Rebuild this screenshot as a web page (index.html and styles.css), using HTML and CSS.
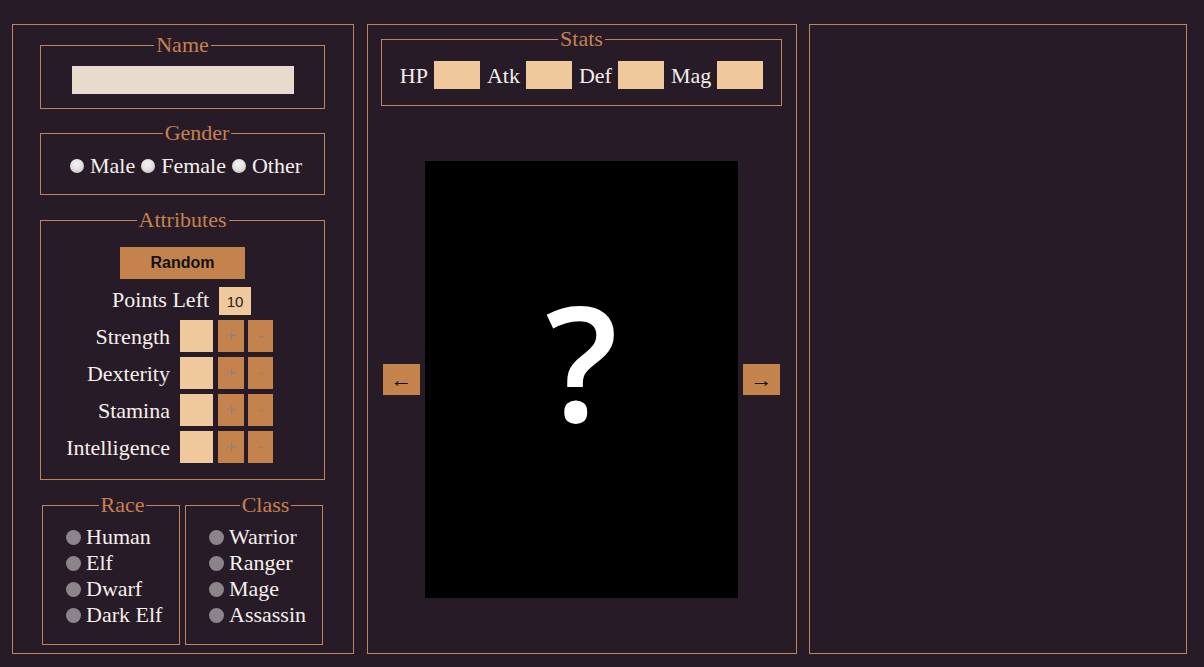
FILE: index.html
```html
<!DOCTYPE html>
<html>
<head>
<meta charset="utf-8">
<title>Character Creator</title>
<link rel="stylesheet" href="styles.css">
</head>
<body>
<div class="page">
<div class="panel left">
  <fieldset class="box name-box">
    <legend class="lg">Name</legend>
    <input class="name-input" type="text">
  </fieldset>

  <fieldset class="box gender-box">
    <legend class="lg">Gender</legend>
    <div class="gender-row">
      <span class="radio light"></span><span class="txt">Male</span>
      <span class="radio light"></span><span class="txt">Female</span>
      <span class="radio light"></span><span class="txt">Other</span>
    </div>
  </fieldset>

  <fieldset class="box attr-box">
    <legend class="lg">Attributes</legend>
    <div class="random-wrap"><button class="random-btn">Random</button></div>
    <div class="points-row">
      <span class="txt">Points Left</span>
      <span class="points-val">10</span>
    </div>
    <div class="attr-row">
      <span class="txt attr-label">Strength</span>
      <span class="attr-val"></span>
      <button class="pm plus">+</button>
      <button class="pm minus">-</button>
    </div>
    <div class="attr-row">
      <span class="txt attr-label">Dexterity</span>
      <span class="attr-val"></span>
      <button class="pm plus">+</button>
      <button class="pm minus">-</button>
    </div>
    <div class="attr-row">
      <span class="txt attr-label">Stamina</span>
      <span class="attr-val"></span>
      <button class="pm plus">+</button>
      <button class="pm minus">-</button>
    </div>
    <div class="attr-row">
      <span class="txt attr-label">Intelligence</span>
      <span class="attr-val"></span>
      <button class="pm plus">+</button>
      <button class="pm minus">-</button>
    </div>
  </fieldset>

  <div class="pair">
    <fieldset class="box list-box">
      <legend class="lg">Race</legend>
      <div class="opt"><span class="radio dark"></span><span class="txt">Human</span></div>
      <div class="opt"><span class="radio dark"></span><span class="txt">Elf</span></div>
      <div class="opt"><span class="radio dark"></span><span class="txt">Dwarf</span></div>
      <div class="opt"><span class="radio dark"></span><span class="txt">Dark Elf</span></div>
    </fieldset>
    <fieldset class="box list-box">
      <legend class="lg">Class</legend>
      <div class="opt"><span class="radio dark"></span><span class="txt">Warrior</span></div>
      <div class="opt"><span class="radio dark"></span><span class="txt">Ranger</span></div>
      <div class="opt"><span class="radio dark"></span><span class="txt">Mage</span></div>
      <div class="opt"><span class="radio dark"></span><span class="txt">Assassin</span></div>
    </fieldset>
  </div>
</div>

<div class="panel middle">
  <fieldset class="box stats-box">
    <legend class="lg">Stats</legend>
    <div class="stats-row">
      <span class="stat"><span class="txt">HP</span><span class="stat-val"></span></span>
      <span class="stat"><span class="txt">Atk</span><span class="stat-val"></span></span>
      <span class="stat"><span class="txt">Def</span><span class="stat-val"></span></span>
      <span class="stat"><span class="txt">Mag</span><span class="stat-val"></span></span>
    </div>
  </fieldset>
  <div class="viewer">
    <button class="arrow">&larr;</button>
    <div class="portrait"><span class="qmark">?</span></div>
    <button class="arrow">&rarr;</button>
  </div>
</div>

<div class="panel right"></div>
</div>
</body>
</html>
```

FILE: styles.css
```css
html, body {
  margin: 0;
  padding: 0;
  background: #281b28;
  font-family: "Liberation Serif", "Times New Roman", serif;
}

.page {
  background: #281b28;
  color: #f5f0ea;
  font-family: "Liberation Serif", "Times New Roman", serif;
  font-size: 22px;
  display: flex;
  align-items: flex-start;
  padding: 24px 0 0 12px;
  height: 667px;
  box-sizing: border-box;
  overflow: hidden;
}

.txt,
.lg {
  font-family: "Liberation Serif", "Times New Roman", serif;
  font-size: 22px;
}

.panel {
  border: 1px solid #c0845a;
  height: 630px;
  box-sizing: border-box;
}

.left {
  width: 342px;
  padding: 8px 28px 0 27px;
}

.middle {
  width: 430px;
  margin-left: 13px;
  padding: 2px 14px 0 13px;
  display: flex;
  flex-direction: column;
}

.right {
  width: 378px;
  margin-left: 12px;
}

.box {
  margin: 0;
  border: 1px solid #c0845a;
  min-width: 0;
}

.box .lg {
  color: #c5814f;
  line-height: 24px;
  padding: 0 2px;
  margin: 0 auto;
}

/* Name */
.name-box {
  padding: 9px 0 14px;
}

.name-input {
  display: block;
  width: 222px;
  height: 28px;
  margin: 0 auto;
  padding: 0;
  border: none;
  background: #e8dacc;
  box-sizing: border-box;
  outline: none;
}

/* Gender */
.gender-box {
  margin-top: 12px;
  padding: 8px 0 16px 29px;
}

.gender-row {
  display: flex;
  align-items: center;
  gap: 6px;
  line-height: 25px;
}

.radio {
  display: inline-block;
  border-radius: 50%;
  flex: none;
}

.radio.light {
  width: 14px;
  height: 14px;
  background: radial-gradient(circle at 45% 35%, #f4f4f4 0%, #e2e2e2 45%, #b9b9b9 100%);
}

.radio.dark {
  width: 15px;
  height: 15px;
  background: #8a8589;
}

/* Attributes */
.attr-box {
  margin-top: 13px;
  padding: 15px 0 16px;
}

.random-wrap {
  display: flex;
  justify-content: center;
}

.random-btn {
  width: 125px;
  height: 32px;
  border: none;
  background: #c4834d;
  color: #111;
  font-family: "Liberation Sans", Arial, sans-serif;
  font-weight: bold;
  font-size: 16px;
  padding: 0;
}

.points-row {
  margin-top: 8px;
  display: flex;
  justify-content: center;
  align-items: center;
  gap: 10px;
  line-height: 25px;
  padding-right: 2px;
}

.points-row .txt {
  position: relative;
  top: -2px;
}

.points-val {
  width: 32px;
  height: 28px;
  background: #efc99b;
  color: #222;
  font-family: "Liberation Sans", Arial, sans-serif;
  font-size: 15px;
  display: flex;
  align-items: center;
  justify-content: center;
}

.attr-row {
  margin-top: 5px;
  display: flex;
  align-items: center;
  height: 32px;
  line-height: 25px;
}

.attr-label {
  width: 129px;
  text-align: right;
  margin-right: 10px;
}

.attr-val {
  width: 33px;
  height: 32px;
  background: #efc99b;
}

.pm {
  height: 32px;
  border: none;
  padding: 0;
  background: #c4834d;
  color: #8c8580;
  font-family: "Liberation Sans", Arial, sans-serif;
  font-size: 16px;
}

.plus {
  width: 26px;
  margin-left: 5px;
}

.minus {
  width: 25px;
  margin-left: 4px;
}

/* Race / Class */
.pair {
  display: flex;
  margin-top: 13px;
  gap: 1px;
}

.list-box {
  width: 138px;
  margin: 0 2px;
  box-sizing: border-box;
  padding: 7px 0 16px 23px;
}

.opt {
  display: flex;
  align-items: center;
  gap: 5px;
  line-height: 26px;
  height: 26px;
  white-space: nowrap;
}

/* Stats */
.stats-box {
  padding: 10px 0 16px;
}

.stats-row {
  display: flex;
  justify-content: center;
  align-items: center;
  gap: 7px;
  line-height: 25px;
}

.stat {
  display: flex;
  align-items: center;
  gap: 6px;
}

.stat-val {
  width: 46px;
  height: 28px;
  background: #efc99b;
}

/* Viewer */
.viewer {
  flex: 1;
  display: flex;
  align-items: center;
  justify-content: center;
  gap: 5px;
}

.arrow {
  width: 37px;
  height: 31px;
  border: none;
  padding: 0;
  background: #c4834d;
  color: #111;
  font-family: "Liberation Serif", serif;
  font-size: 22px;
  line-height: 31px;
}

.portrait {
  width: 313px;
  height: 437px;
  background: #000;
  display: flex;
  align-items: center;
  justify-content: center;
  padding-bottom: 39px;
  box-sizing: border-box;
}

.qmark {
  font-family: "Open Sans", sans-serif;
  font-size: 160px;
  font-weight: 600;
  line-height: 160px;
  color: #fff;
}
```
